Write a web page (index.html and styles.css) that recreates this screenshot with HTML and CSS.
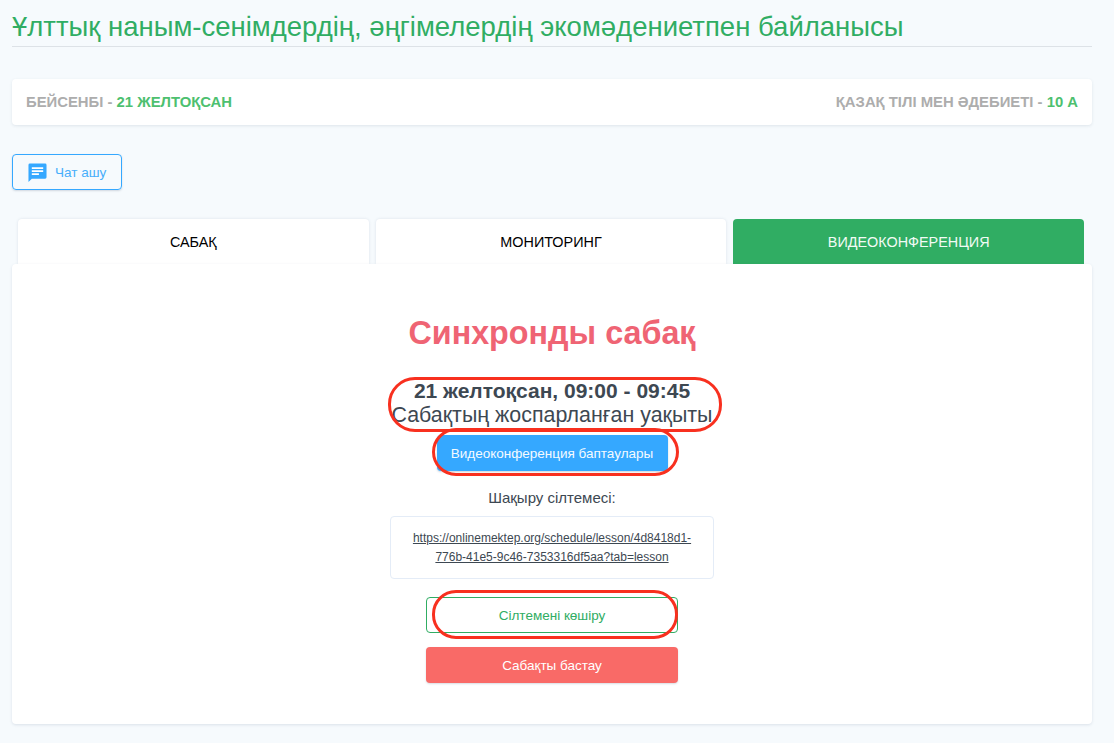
FILE: index.html
```html
<!DOCTYPE html>
<html lang="kk">
<head>
<meta charset="utf-8">
<title>Синхронды сабақ</title>
<link rel="stylesheet" href="styles.css">
</head>
<body>
<div class="page">
  <h1 class="title">Ұлттық наным-сенімдердің, әңгімелердің экомәдениетпен байланысы</h1>
  <div class="info">
    <span>БЕЙСЕНБІ - <b>21 ЖЕЛТОҚСАН</b></span>
    <span>ҚАЗАҚ ТІЛІ МЕН ӘДЕБИЕТІ - <b>10 А</b></span>
  </div>
  <button class="chat" type="button">
    <svg class="chat-icon" viewBox="0 0 20 20" width="19" height="19"><path fill="#35a8ff" d="M2 .5h16A1.500 1.500 0 0 1 19.500 2v13a1.500 1.500 0 0 1-1.500 1.500H4L.5 20V2A1.500 1.500 0 0 1 2 .5z"/><path fill="#fff" d="M4 4.500h12v1.800H4zM4 7.700h12v1.800H4zM4 10.900h7.500v1.800H4z"/></svg>
    <span>Чат ашу</span>
  </button>
  <nav class="tabs">
    <a class="tab">САБАҚ</a>
    <a class="tab">МОНИТОРИНГ</a>
    <a class="tab active">ВИДЕОКОНФЕРЕНЦИЯ</a>
  </nav>
  <main class="card">
    <h2 class="heading">Синхронды сабақ</h2>
    <div class="when">
      <strong>21 желтоқсан, 09:00 - 09:45</strong>
      <span>Сабақтың жоспарланған уақыты</span>
      <i class="mark mark-when"></i>
    </div>
    <div class="settings-wrap">
      <button class="btn btn-blue" type="button">Видеоконференция баптаулары</button>
      <i class="mark mark-settings"></i>
    </div>
    <p class="invite">Шақыру сілтемесі:</p>
    <div class="link-box"><a href="#">https://onlinemektep.org/schedule/lesson/4d8418d1-776b-41e5-9c46-7353316df5aa?tab=lesson</a></div>
    <div class="copy-wrap">
      <button class="btn btn-outline" type="button">Сілтемені көшіру</button>
      <i class="mark mark-copy"></i>
    </div>
    <button class="btn btn-red" type="button">Сабақты бастау</button>
  </main>
</div>
</body>
</html>
```
FILE: styles.css
```css
* { box-sizing: border-box; }
html, body { margin: 0; height: 100%; }
body {
  background: #f6fafd;
  font-family: "Liberation Sans", Arial, sans-serif;
  color: #3d4852;
  overflow: hidden;
}
.page { padding: 0 22px 0 12px; }
.title {
  margin: 0;
  height: 47px;
  padding-top: 11px;
  font-size: 27.500px;
  line-height: 32px;
  font-weight: 400;
  color: #30ad63;
  border-bottom: 1px solid #dde2e7;
  white-space: nowrap;
}
.info {
  margin-top: 32px;
  height: 46px;
  padding: 0 14px;
  display: flex;
  justify-content: space-between;
  align-items: center;
  background: #fff;
  border-radius: 4px;
  box-shadow: 0 1px 3px rgba(60, 80, 110, .12);
  font-size: 14.850px;
  font-weight: 700;
  color: #adadad;
}
.info b { color: #4dc06f; }
.chat {
  margin-top: 29px;
  width: 110px;
  height: 36px;
  padding: 0 0 0 15px;
  display: flex;
  align-items: center;
  gap: 8px;
  background: transparent;
  border: 1px solid #35a8ff;
  border-radius: 4px;
  box-shadow: 0 1px 2px rgba(60, 80, 110, .2);
  color: #47aefb;
  font: 13.500px "Liberation Sans", Arial, sans-serif;
}
.chat-icon { flex: none; }
.tabs {
  margin: 29px 8px 0 6px;
  display: flex;
  gap: 7px;
  height: 45px;
}
.tab {
  flex: 1;
  padding-top: 15px;
  text-align: center;
  font-size: 14.400px;
  line-height: 16px;
  color: #000;
  background: #fff;
  border-radius: 4px 4px 0 0;
  box-shadow: 0 0 3px rgba(60, 80, 110, .14);
}
.tab.active { background: #30ad63; color: #f2fbf5; box-shadow: none; }
.card {
  position: relative;
  height: 460px;
  padding-top: 49px;
  display: flex;
  flex-direction: column;
  align-items: center;
  background: #fff;
  border-radius: 4px;
  box-shadow: 0 1px 3px rgba(60, 80, 110, .14);
}
.heading {
  margin: 0;
  font-size: 32.300px;
  line-height: 40px;
  font-weight: 700;
  color: #ef6474;
}
.when {
  position: relative;
  margin-top: 25px;
  display: flex;
  flex-direction: column;
  align-items: center;
  font-size: 21.400px;
  line-height: 25px;
}
.when strong { font-size: 21px; font-weight: 700; }
.settings-wrap { position: relative; margin-top: 7px; }
.btn {
  display: block;
  height: 36px;
  border-radius: 4px;
  font: 13.500px "Liberation Sans", Arial, sans-serif;
}
.btn-blue {
  width: 231px;
  border: 0;
  background: #35a8ff;
  color: #f4faff;
  box-shadow: 0 1px 2px rgba(60, 80, 110, .25);
}
.invite { margin: 18px 0 0; font-size: 15px; line-height: 18px; }
.link-box {
  margin-top: 9px;
  width: 324px;
  height: 63px;
  padding: 12px 14px 0;
  border: 1px solid #e4ecf7;
  border-radius: 4px;
  text-align: center;
  font-size: 12px;
  line-height: 19px;
}
.link-box a { color: #3d4852; }
.copy-wrap { position: relative; margin-top: 18px; }
.btn-outline {
  width: 252px;
  background: #fff;
  border: 1px solid #30ad63;
  color: #30ad63;
}
.btn-red {
  margin-top: 14px;
  width: 252px;
  border: 0;
  background: #f96a67;
  color: #fff;
  box-shadow: 0 1px 2px rgba(60, 80, 110, .2);
}
.mark {
  position: absolute;
  border: 3px solid #f8301f;
  pointer-events: none;
}
.mark-when { left: -4px; right: -10px; top: -1px; height: 55px; border-radius: 27px; }
.mark-settings { left: -5px; right: -11px; top: -7px; height: 48px; border-radius: 24px; }
.mark-copy { left: 6px; right: 0; top: -7px; height: 49px; border-radius: 24px; }
```
